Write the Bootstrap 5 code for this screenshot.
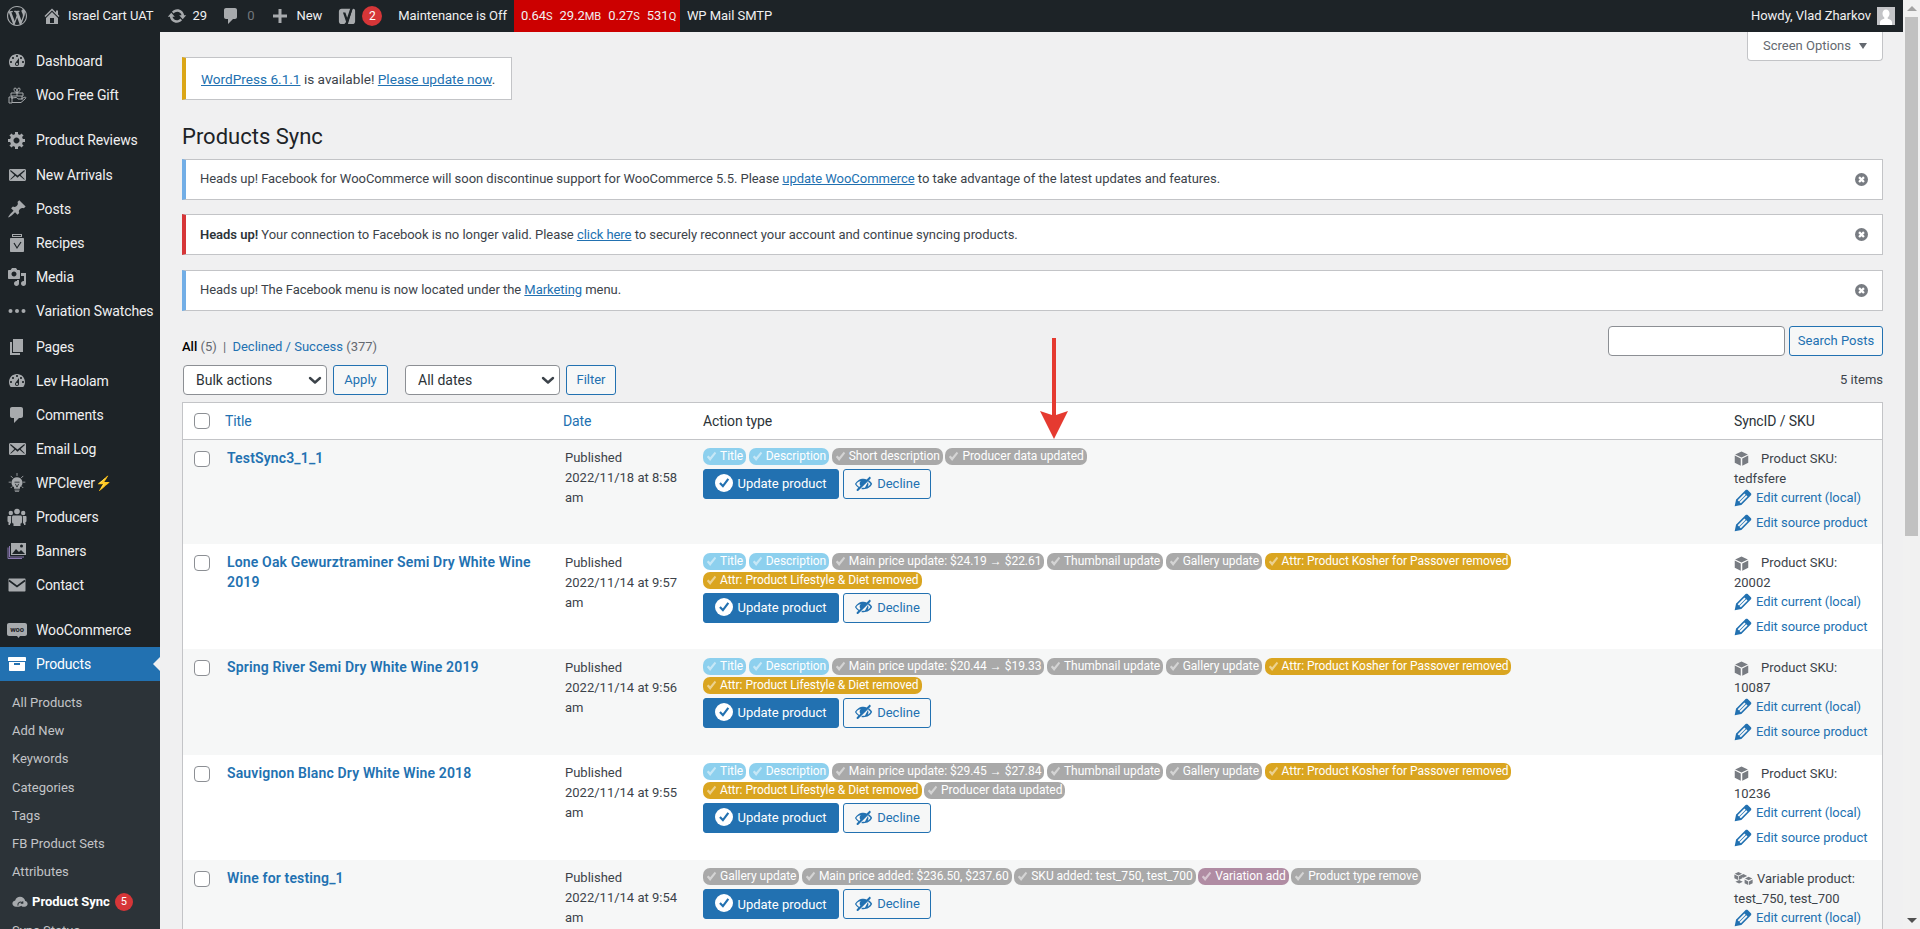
<!DOCTYPE html>
<html lang="en">
  <head>
    <meta charset="UTF-8" />
    <title>Products Sync</title>
    <link href="https://cdn.jsdelivr.net/npm/bootstrap@5.3.3/dist/css/bootstrap.min.css" rel="stylesheet" />
    <style>
      html, body { height: 100%; overflow: hidden; }
      body { font-family: Roboto, "Liberation Sans", sans-serif; font-size: 13px; line-height: 20px; color: #3c434a; background: #f0f0f1; }
      a { color: #2271b1; text-decoration: none; }
      .page-wrap { min-width: 0; height: 929px; }

      /* admin bar */
      .admin-bar { height: 32px; background: #1d2327; color: #f0f0f1; flex: none; white-space: nowrap; letter-spacing: -0.04px; }
      .admin-bar svg { fill: #a7aaad; display: block; }
      .bar-item { height: 32px; }
      .bar-logo { padding: 0 7px; }
      .bar-item span { margin-left: 6px; }
      .bar-pull { margin-left: -3px; }
      .bar-pull-sm { margin-left: -2px; }
      .bar-dim { color: #72777c; }
      .bar-count { width: 20px; height: 20px; margin-left: 6px; border-radius: 50%; background: #d63638; color: #fff; font-size: 12px; line-height: 20px; text-align: center; }
      .bar-stats { height: 32px; width: 166px; background: #c00; margin: 0 7px; padding: 0 7px; gap: 7px; }
      .bar-stats small { font-size: 11px; }
      .bar-avatar { width: 18px; height: 18px; background: #c3c4c7; margin-left: 6px; margin-right: 8px; }

      /* side menu */
      .side-menu { width: 160px; flex: none; background: #1d2327; padding-top: 12px; overflow: hidden; }
      .menu-link { height: 34px; color: #f0f0f1; font-size: 14px; letter-spacing: -0.14px; padding-left: 36px; position: relative; white-space: nowrap; }
      .menu-link svg { position: absolute; left: 7px; top: 7px; width: 20px; height: 20px; fill: #a7aaad; }
      .menu-gap { margin-top: 11px; }
      .menu-nudge { margin-top: 1px; }
      .menu-pages { margin-top: 2px; }
      .menu-active { background: #2271b1; color: #fff; }
      .menu-active svg { fill: #fff; }
      .menu-active::after { content: ""; position: absolute; right: 0; top: 10px; border: 7px solid transparent; border-right-color: #f0f0f1; border-left-width: 0; }
      .sub-menu { background: #2c3338; padding-top: 8px; }
      .sub-link { height: 28.2px; padding-left: 12px; color: #c3c4c7; white-space: nowrap; }
      .sub-current { height: 30px; margin-top: 1px; color: #fff; font-weight: 700; }
      .sub-current svg { width: 16px; height: 16px; fill: #a7aaad; margin-right: 4px; flex: none; }
      .sub-count { width: 18px; height: 18px; border-radius: 50%; background: #d63638; color: #fff; font-size: 11px; font-weight: 400; line-height: 18px; text-align: center; margin-left: 5px; }

      /* content */
      .wp-main { padding: 0 20px 0 22px; min-width: 0; }
      .screen-row { height: 25px; }
      .screen-tab { height: 29px; width: 136px; background: #fff; border: 1px solid #c3c4c7; border-top: 0; border-radius: 0 0 4px 4px; color: #646970; }
      .screen-tab i { border: 4px solid transparent; border-top: 6px solid #646970; border-bottom: 0; margin-left: 8px; display: block; }
      .update-nag { width: 330px; height: 43px; background: #fff; border: 1px solid #c3c4c7; border-left: 4px solid #dba617; padding-left: 15px; font-size: 13.6px; }
      .update-nag a, .wp-notice a { text-decoration: underline; }
      .wp-title { font-size: 22px; font-weight: 400; line-height: 29px; margin: 22px 0 7.5px 0; color: #1d2327; }
      .wp-notice { height: 41px; margin-bottom: 14.5px; background: #fff; border: 1px solid #c3c4c7; border-left: 4px solid #72aee6; padding-left: 14px; padding-right: 14px; letter-spacing: -0.04px; }
      .wp-notice-error { border-left-color: #d63638; }
      .wp-notice b { font-weight: 600; color: #2c3338; }
      .wp-notice svg { width: 13px; height: 13px; flex: none; }
      .search-row { height: 30px; margin-top: 15px; }
      .view-links { font-size: 13px; padding-top: 11px; }
      .view-links b { font-weight: 500; color: #000; }
      .view-links em { font-style: normal; color: #646970; }
      .view-links i { font-style: normal; color: #646970; margin: 0 3px; }
      .wp-input { width: 177px; height: 30px; background: #fff; border: 1px solid #8c8f94; border-radius: 4px; margin-right: 4px; }
      .wp-btn { --bs-btn-padding-x: 0; --bs-btn-padding-y: 0; height: 30px; font-size: 13px; line-height: 28px; color: #2271b1; background: #f6f7f7; border: 1px solid #2271b1; border-radius: 3px; }
      .wp-btn-search { width: 94px; }
      .wp-btn-apply { width: 55px; }
      .wp-btn-filter { width: 50px; }
      .tool-row { height: 30px; margin-top: 9px; margin-left: 1px; }
      .wp-select { --bs-form-select-bg-img: url("data:image/svg+xml,%3csvg xmlns='http://www.w3.org/2000/svg' viewBox='0 0 16 16'%3e%3cpath fill='none' stroke='%233c434a' stroke-linecap='round' stroke-linejoin='round' stroke-width='2.4' d='m3 6 5 4.5L13 6'/%3e%3c/svg%3e"); height: 30px; font-size: 14px; line-height: 28px; color: #2c3338; border: 1px solid #8c8f94; border-radius: 4px; padding: 0 20px 0 12px; background-position: right 3px center; background-size: 16px 16px; }
      .wp-select-bulk { width: 144px; margin-right: 6px; }
      .wp-select-date { width: 155px; margin-left: 17px; margin-right: 6px; }
      .item-count { color: #3c434a; }

      /* table */
      .table-box { margin-top: 7px; border: 1px solid #c3c4c7; background: #fff; }
      .sync-table { table-layout: fixed; width: 100%; margin: 0; --bs-table-color: #3c434a; --bs-table-bg: #fff; font-size: 13px; line-height: 20px; }
      .sync-table th { height: 36px; font-size: 14px; letter-spacing: -0.1px; font-weight: 400; color: #2c3338; padding: 8px 10px; vertical-align: middle; border-bottom: 1px solid #c3c4c7; }
      .sync-table td { padding: 8.5px 10px 8px; vertical-align: top; }
      .sync-table tbody tr { height: 105.2px; }
      .sync-table tr.row-alt { --bs-table-bg: #f6f7f7; }
      .sync-table .cell-check { padding: 0 0 0 11px; }
      .sync-table td.cell-check { padding-top: 11px; }
      .sync-table td.cell-date { padding-left: 12px; }
      .sync-table th.cell-title { padding-left: 8px; }
      .wp-check { display: block; width: 16px; height: 16px; margin: 0; border: 1px solid #8c8f94; border-radius: 4px; background: #fff; appearance: none; }
      .row-title { font-size: 14px; font-weight: 600; line-height: 20px; letter-spacing: 0.15px; display: block; margin-top: -0.5px; }
      .tag-list { gap: 1px 2.5px; }
      .sync-tag { height: 17px; margin-bottom: 1px; border-radius: 7px; padding: 0 3px; font-size: 12px; line-height: 17px; letter-spacing: -0.02px; color: #fff; white-space: nowrap; }
      .sync-tag svg { width: 11px; height: 11px; fill: #fff; opacity: .5; margin-right: 3px; flex: none; }
      .tag-blue { background: #8dd0ee; }
      .tag-grey { background: #a9a9a9; }
      .tag-gold { background: #daa520; }
      .tag-plum { background: #b08ca3; }
      .action-btns { gap: 4px; margin-top: 3px; }
      .btn-update { width: 136px; height: 30px; background: #2271b1; border: 1px solid #2271b1; border-radius: 3px; color: #fff; font-size: 13px; --bs-btn-padding-x: 0; --bs-btn-padding-y: 0; --bs-btn-hover-color: #fff; --bs-btn-hover-bg: #2271b1; }
      .btn-update svg { width: 18px; height: 18px; margin-right: 4px; margin-top: -2px; }
      .btn-decline { width: 88px; background: #f6f7f7; }
      .btn-decline svg { width: 19px; height: 19px; fill: #2271b1; margin-right: 4px; margin-top: -2px; }
      .sku-line { white-space: nowrap; }
      .sku-line svg { width: 15px; height: 15px; fill: #787c82; margin-right: 12px; flex: none; }
      .sku-var svg { width: 19px; margin-right: 4px; }
      .sku-edit { height: 25px; white-space: nowrap; letter-spacing: -0.05px; }
      .sku-edit:first-of-type { margin-top: -3.5px; }
      .sku-edit svg { width: 24px; height: 24px; fill: #2271b1; margin: 0 1.5px 0 -3.5px; flex: none; }
      .sync-table td.cell-sku { padding: 9px 0 0 10px; }

      /* scrollbar and annotation */
      .fake-scroll { width: 17px; flex: none; background: #f1f1f1; }
      .fake-scroll i { display: block; width: 0; margin: 6px auto 0; border: 5px solid transparent; border-top: 0; border-bottom: 5px solid #a3a3a3; }
      .fake-scroll b { display: block; width: 13px; height: 519px; margin: 6px 0 0 2px; background: #c1c1c1; }
      .fake-scroll u { display: block; width: 0; margin: auto auto 6px; border: 5px solid transparent; border-bottom: 0; border-top: 5px solid #505050; }
      .red-arrow { position: absolute; left: 1040px; top: 338px; width: 28px; height: 101px; }
    </style>
  </head>
  <body class="d-flex position-relative">
    <svg width="0" height="0" class="position-absolute">
      <defs>
        <symbol id="i-wp" viewBox="0 0 20 20"><path d="M20 10c0-5.51-4.49-10-10-10C4.48 0 0 4.49 0 10c0 5.52 4.48 10 10 10 5.51 0 10-4.48 10-10zM7.78 15.37L4.37 6.22c.55-.02 1.17-.08 1.17-.08.5-.06.44-1.13-.06-1.11 0 0-1.45.11-2.37.11-.18 0-.37 0-.58-.01C4.12 2.69 6.87 1.11 10 1.11c2.33 0 4.45.87 6.05 2.34-.68-.11-1.65.39-1.65 1.58 0 .74.45 1.36.9 2.1.35.61.55 1.36.55 2.46 0 1.49-1.4 5-1.4 5l-3.03-8.37c.54-.02.82-.17.82-.17.5-.05.44-1.25-.06-1.22 0 0-1.44.12-2.38.12-.87 0-2.33-.12-2.33-.12-.5-.03-.56 1.2-.06 1.22l.92.08 1.26 3.41zM17.41 10c.24-.64.74-1.87.43-4.25.7 1.29 1.05 2.71 1.05 4.25 0 3.29-1.73 6.24-4.4 7.78.97-2.59 1.94-5.2 2.92-7.78zM6.1 18.09C3.12 16.65 1.11 13.53 1.11 10c0-1.3.23-2.48.72-3.59C3.25 10.3 4.67 14.2 6.1 18.09zm4.03-6.63l2.58 6.98c-.86.29-1.76.45-2.71.45-.79 0-1.57-.11-2.29-.33.81-2.38 1.62-4.74 2.42-7.1z"/></symbol>
        <symbol id="i-home" viewBox="0 0 20 20"><path d="M16 8.500l1.530 1.530-1.060 1.060L10 4.620l-6.470 6.470-1.060-1.060L10 2.500l4 4v-2h2v4zm-6-2.460l6 5.990V18H4v-5.970zM12 17v-5H8v5h4z"/></symbol>
        <symbol id="i-update" viewBox="0 0 20 20"><path d="M10.200 3.280c3.530 0 6.430 2.610 6.920 6h2.080l-3.500 4-3.500-4h2.320c-.45-1.970-2.210-3.450-4.320-3.450-1.450 0-2.730.71-3.540 1.780L4.950 5.660C6.230 4.200 8.110 3.280 10.200 3.280zm-.4 13.440c-3.520 0-6.430-2.610-6.920-6H.8l3.500-4c1.170 1.330 2.330 2.670 3.500 4H5.480c.45 1.970 2.210 3.450 4.320 3.450 1.450 0 2.730-.71 3.540-1.780l1.710 1.950c-1.280 1.460-3.150 2.380-5.250 2.380z"/></symbol>
        <symbol id="i-comment" viewBox="0 0 20 20"><path d="M5 2h9c1.100 0 2 .9 2 2v7c0 1.100-.9 2-2 2h-2l-5 5v-5H5c-1.100 0-2-.9-2-2V4c0-1.100.9-2 2-2z"/></symbol>
        <symbol id="i-plus" viewBox="0 0 20 20"><path d="M17 8.500v3h-5.500V17h-3v-5.500H3v-3h5.500V3h3v5.500z"/></symbol>
        <symbol id="i-yoast" viewBox="0 0 20 22"><path d="M4 3h11l-1 2.500L8 20H4c-1.700 0-3-1.300-3-3V6c0-1.700 1.300-3 3-3zm12 0h1c1.100 0 2 .9 2 2v12c0 1.700-1.300 3-3 3h-5z"/><path fill="#1d2327" d="M14.500 0h3l-6.500 18c-.5 1.700-2 3.500-4 4v-2.200c1-.4 1.800-1.300 2-2.300L5.500 7h2.700l2 6z"/></symbol>
        <symbol id="i-dash" viewBox="0 0 20 20"><path d="M3.760 16h12.480c1.100-1.370 1.760-3.110 1.760-5 0-4.420-3.580-8-8-8s-8 3.580-8 8c0 1.890.66 3.630 1.760 5zM10 4c.55 0 1 .45 1 1s-.45 1-1 1-1-.45-1-1 .45-1 1-1zM6 6c.55 0 1 .45 1 1s-.45 1-1 1-1-.45-1-1 .45-1 1-1zm8 0c.55 0 1 .45 1 1s-.45 1-1 1-1-.45-1-1 .45-1 1-1zm-5.370 5.550L12 7v6c0 1.100-.9 2-2 2s-2-.9-2-2c0-.57.24-1.080.63-1.450zM4 10c.55 0 1 .45 1 1s-.45 1-1 1-1-.45-1-1 .45-1 1-1zm12 0c.55 0 1 .45 1 1s-.45 1-1 1-1-.45-1-1 .45-1 1-1zm-5 3c0-.55-.45-1-1-1s-1 .45-1 1 .45 1 1 1 1-.45 1-1z"/></symbol>
        <symbol id="i-gift" viewBox="0 0 20 20"><g fill="none" stroke="#a7aaad" stroke-width="1"><path d="M4 8h12v3H4zM5 11v3M15 11v4M10 8v3M10 8C7 7 6 3 8 3s2 3 2 5zm0 0c3-1 4-5 2-5s-2 3-2 5z"/><path d="M2 12h3v6H2zM5 13l4-.5c1 0 1.500 1 2 1.500h3l4-2c.8 0 1 .8.5 1.500L14 17.500H5"/></g></symbol>
        <symbol id="i-gear" viewBox="0 0 20 20"><path d="M18 12h-2.180c-.17.7-.44 1.350-.81 1.930l1.540 1.540-2.100 2.100-1.540-1.540c-.58.36-1.230.63-1.910.79V19H8v-2.180c-.68-.16-1.330-.43-1.910-.79l-1.540 1.540-2.120-2.120 1.540-1.540c-.36-.58-.63-1.230-.79-1.910H1V9.030h2.170c.16-.7.44-1.350.8-1.940L2.430 5.550l2.100-2.100 1.540 1.540c.58-.37 1.240-.64 1.930-.81V2h3v2.180c.68.16 1.330.43 1.910.79l1.540-1.540 2.120 2.120-1.540 1.540c.36.59.64 1.240.8 1.940H18V12zm-8.500 1.500c1.660 0 3-1.340 3-3s-1.340-3-3-3-3 1.340-3 3 1.340 3 3 3z"/></symbol>
        <symbol id="i-mailalt" viewBox="0 0 20 20"><path d="M19 14.500v-9c0-.83-.67-1.500-1.500-1.500H3.490c-.83 0-1.500.67-1.500 1.500v9c0 .83.67 1.500 1.500 1.500H17.500c.83 0 1.500-.67 1.500-1.500zm-1.310-9.110c.33.33.15.67-.03.84L13.600 9.950l3.900 4.060c.12.14.2.36.06.51-.13.16-.43.15-.56.05l-4.370-3.730-2.140 1.950-2.130-1.950-4.370 3.730c-.13.1-.43.11-.56-.05-.14-.15-.06-.37.06-.51l3.900-4.060-4.060-3.720c-.18-.17-.36-.51-.03-.84s.67-.17.95.07l6.240 5.040 6.250-5.040c.28-.24.62-.4.95-.07z"/></symbol>
        <symbol id="i-pin" viewBox="0 0 20 20"><path d="M10.440 3.020l1.820-1.820 6.360 6.350-1.830 1.820c-1.050-.68-2.480-.57-3.410.36l-.75.75c-.92.93-1.040 2.350-.35 3.410l-1.830 1.820-2.410-2.410-2.800 2.790c-.42.42-3.380 2.710-3.800 2.290s1.860-3.390 2.280-3.810l2.790-2.790L4.100 9.360l1.830-1.820c1.050.69 2.480.57 3.400-.36l.75-.75c.93-.92 1.050-2.350.36-3.410z"/></symbol>
        <symbol id="i-jar" viewBox="0 0 20 20"><path d="M5 1h10v3H5zM4 5h12c.6 0 1 .4 1 1v12c0 .6-.4 1-1 1H4c-.6 0-1-.4-1-1V6c0-.6.4-1 1-1z"/><path fill="none" stroke="#1d2327" stroke-width="1.200" d="M7 10l3 5 4-6M6 2.500h8"/></symbol>
        <symbol id="i-media" viewBox="0 0 20 20"><path d="M13 11V4c0-.55-.45-1-1-1h-1.670L9 1H5L3.670 3H2c-.55 0-1 .45-1 1v7c0 .55.45 1 1 1h10c.55 0 1-.45 1-1zM7 4.500c1.380 0 2.500 1.120 2.500 2.500S8.380 9.500 7 9.500 4.500 8.380 4.500 7 5.620 4.500 7 4.500zM14 6h5v10.500c0 1.380-1.120 2.500-2.500 2.500S14 17.880 14 16.500s1.120-2.500 2.500-2.500c.17 0 .34.02.5.05V9h-3V6zm-4 8.050V13h2v3.500c0 1.380-1.120 2.500-2.500 2.500S7 17.880 7 16.500 8.120 14 9.500 14c.17 0 .34.02.5.05z"/></symbol>
        <symbol id="i-dots" viewBox="0 0 20 20"><circle cx="3.500" cy="10" r="2"/><circle cx="10" cy="10" r="2"/><circle cx="16.500" cy="10" r="2"/></symbol>
        <symbol id="i-pages" viewBox="0 0 20 20"><path d="M6 15V2h10v13H6zm-1 1h8v2H3V5h2v11z"/></symbol>
        <symbol id="i-bulb" viewBox="0 0 24 24"><path d="M12 5a6.500 6.500 0 0 0-3.500 12v2h7v-2A6.500 6.500 0 0 0 12 5z"/><path fill="none" stroke="#a7aaad" stroke-width="1" d="M9 20.500h6M9.500 22h5M12 0v3.500M2 11h3M19 11h3M4.500 3.500 7 6M19.500 3.500 17 6M4.500 18 6.500 16M19.500 18 17.500 16"/><path fill="none" stroke="#1d2327" stroke-width="1" d="M9 11h6M10 13l2 4 2-4"/></symbol>
        <symbol id="i-people" viewBox="0 0 20 20"><circle cx="10" cy="4.500" r="2.800"/><circle cx="3.800" cy="6" r="2.200"/><circle cx="16.200" cy="6" r="2.200"/><path d="M6.500 8.500h7c.9 0 1.500.7 1.500 1.500v5c0 1.500-1 1.500-1.500 1.500V19h-7v-2.500C6 16.500 5 16.500 5 15v-5c0-.8.6-1.500 1.500-1.500zM1.500 9h2.700L4 16.500H3V18H1.500V15C.8 15 .5 14.500.5 14v-4c0-.6.4-1 1-1zM15.800 9h2.700c.6 0 1 .4 1 1v4c0 .5-.3 1-1 1v3H17v-1.500h-1z"/></symbol>
        <symbol id="i-banner" viewBox="0 0 20 20"><path fill="none" stroke="#8a78b0" stroke-width="1" d="M1 6.500v11h14M2.500 5v11H17"/><path d="M4 2h15v12H4z"/><path fill="#1d2327" d="M5 13l4-5 3 3 2-2 4 4zM16 5a1.500 1.500 0 1 1-3 0 1.500 1.500 0 0 1 3 0z"/></symbol>
        <symbol id="i-mail" viewBox="0 0 20 20"><path d="M2.500 3.500h15c.6 0 1 .4 1 1v11c0 .6-.4 1-1 1h-15c-.6 0-1-.4-1-1v-11c0-.6.4-1 1-1z"/><path fill="none" stroke="#1d2327" stroke-width="1.600" d="M2 5.500l8 6 8-6"/></symbol>
        <symbol id="i-woo" viewBox="0 0 20 20"><path d="M2 3h16c1.100 0 2 .9 2 2v9c0 1.100-.9 2-2 2h-5l-1.500 2-1.500-2H2c-1.100 0-2-.9-2-2V5c0-1.100.9-2 2-2z"/><text x="10" y="12" text-anchor="middle" font-size="7.500" font-weight="700" fill="#1d2327" font-family="Roboto, sans-serif">woo</text></symbol>
        <symbol id="i-box" viewBox="0 0 20 20"><path d="M19 4v3H1V4c0-.55.45-1 1-1h16c.55 0 1 .45 1 1zM2 8h16v8c0 .55-.45 1-1 1H3c-.55 0-1-.45-1-1V8zm11 3V9H7v2h6z"/></symbol>
        <symbol id="i-cloud" viewBox="0 0 20 20"><path d="M5 16C2.500 16 .5 14.300.5 12c0-2 1.500-3.700 3.500-4C4.800 5.200 7.200 3.500 10 3.500c3.300 0 6 2.300 6.500 5.300 1.800.4 3 1.700 3 3.500 0 2-1.600 3.700-3.700 3.700z"/><path fill="none" stroke="#2c3338" stroke-width="1.300" d="M7.500 14.500a3.500 3.500 0 0 1 5-4l1 1M13.500 9v2.500H11M12.500 15a3 3 0 0 1-3 1"/></symbol>
        <symbol id="i-close" viewBox="0 0 20 20"><circle cx="10" cy="10" r="10" fill="#787c82"/><path fill="#fff" d="M15 7.500 12.500 10l2.500 2.500-2.500 2.500L10 12.500 7.500 15 5 12.500 7.500 10 5 7.500 7.500 5 10 7.500 12.500 5z"/></symbol>
        <symbol id="i-tick" viewBox="0 0 20 20"><path d="M7.500 18 1.500 11l3-3 3 3.500L16 1.500l2.500 2.500z"/></symbol>
        <symbol id="i-okay" viewBox="0 0 20 20"><circle cx="10" cy="10" r="10" fill="#fff"/><path fill="none" stroke="#2271b1" stroke-width="2.400" d="m5.500 10 3.300 3.500 6-8"/></symbol>
        <symbol id="i-hidden" viewBox="0 0 20 20"><path d="M17.200 3.300l.16.17c.39.39.39 1.020 0 1.410L4.550 17.700c-.39.39-1.030.39-1.410 0l-.17-.17c-.39-.39-.39-1.020 0-1.410l1.590-1.600c-1.570-1-2.760-2.300-3.560-3.930.81-1.650 2.030-2.980 3.640-3.990S8.040 5.090 10 5.090c1.200 0 2.330.21 3.400.6l2.380-2.390c.39-.39 1.030-.39 1.420 0zM2.400 10.590c.69 1.230 1.710 2.250 3.050 3.050l1.280-1.280c-.51-.69-.77-1.470-.77-2.360 0-1.060.36-1.980 1.090-2.760-1.040.27-1.960.7-2.760 1.260-.8.58-1.430 1.270-1.890 2.090zM15.700 6.700c1.500 1 2.700 2.300 3.400 3.900-.8 1.650-2 2.980-3.600 3.990-1.610 1.010-3.440 1.500-5.500 1.500-.9 0-1.700-.1-2.500-.3l1.300-1.300c.4.100.8.100 1.200.100 1.700 0 3.200-.4 4.500-1.200 1.200-.8 2.200-1.600 2.900-2.800-.5-.9-1.200-1.700-2-2.300l-.7.700c.3.600.5 1.300.5 2 0 2.200-1.800 4-4 4z"/></symbol>
        <symbol id="i-cube" viewBox="0 0 20 20"><path d="M10 .5l8.500 4L10 8.500 1.500 4.500zM1 6l8 4v9.500l-8-4zM19 6v9.500l-8 4V10z"/></symbol>
        <symbol id="i-cubes" viewBox="0 0 26 20"><path d="M6 1l5 2.500L6 6 1 3.500zM.5 4.500 5.500 7v5L.5 9.500zM11.500 4.500v5L6.500 12V7zM13 4l5 2.500-5 2.500-5-2.500zM20 7.500l5 2.500-5 2.500-5-2.500zM14.500 11.500l5 2.500v5l-5-2.500zM25.500 11.500v5l-5 2.500v-5zM7 12l5 2.500L7 17l-5-2.500z"/></symbol>
        <symbol id="i-edit" viewBox="0 0 20 20"><path d="M13.890 3.390l2.710 2.720c.46.46.42 1.240.03 1.640l-8.010 8.020-5.560 1.160 1.160-5.580s7.600-7.630 7.990-8.030c.39-.39 1.220-.39 1.680.07zm-2.730 2.790l-5.590 5.610 1.110 1.110 5.540-5.650zm-2.970 8.230l5.580-5.600-1.070-1.080-5.590 5.600z"/></symbol>
        <symbol id="i-user" viewBox="0 0 18 18"><path fill="#fff" d="M9 2.500c2.200 0 3.500 1.700 3.500 4 0 1.800-.8 3.300-1.800 4v1.200c2.300.7 4.300 1.800 4.300 3.300v3H3v-3c0-1.500 2-2.600 4.300-3.300v-1.200c-1-.7-1.800-2.200-1.800-4 0-2.300 1.300-4 3.500-4z"/></symbol>
      </defs>
    </svg>

    <div class="page-wrap flex-grow-1 d-flex flex-column">
      <header class="admin-bar d-flex align-items-center">
        <a class="bar-item bar-logo d-flex align-items-center" href="#"><svg width="20" height="20"><use href="#i-wp" /></svg></a>
        <div class="bar-item d-flex align-items-center px-2"><svg width="20" height="20"><use href="#i-home" /></svg><span>Israel Cart UAT</span></div>
        <div class="bar-item bar-pull d-flex align-items-center px-2"><svg width="20" height="20"><use href="#i-update" /></svg><span>29</span></div>
        <div class="bar-item bar-pull-sm d-flex align-items-center px-2"><svg width="20" height="20"><use href="#i-comment" /></svg><span class="bar-dim">0</span></div>
        <div class="bar-item d-flex align-items-center px-2"><svg width="20" height="20"><use href="#i-plus" /></svg><span>New</span></div>
        <div class="bar-item d-flex align-items-center px-2"><svg width="18" height="20"><use href="#i-yoast" /></svg><div class="bar-count">2</div></div>
        <div class="bar-item d-flex align-items-center ps-2">Maintenance is Off</div>
        <div class="bar-stats d-flex align-items-center"><div>0.64<small>S</small></div><div>29.2<small>MB</small></div><div>0.27<small>S</small></div><div>531<small>Q</small></div></div>
        <div>WP Mail SMTP</div>
        <div class="ms-auto">Howdy, Vlad Zharkov</div>
        <div class="bar-avatar"><svg width="18" height="18"><use href="#i-user" /></svg></div>
      </header>

      <div class="d-flex flex-grow-1 overflow-hidden">
        <nav class="side-menu">
          <div class="menu-link d-flex align-items-center"><svg><use href="#i-dash" /></svg>Dashboard</div>
          <div class="menu-link d-flex align-items-center"><svg><use href="#i-gift" /></svg>Woo Free Gift</div>
          <div class="menu-link d-flex align-items-center menu-gap"><svg><use href="#i-gear" /></svg>Product Reviews</div>
          <div class="menu-link d-flex align-items-center menu-nudge"><svg><use href="#i-mailalt" /></svg>New Arrivals</div>
          <div class="menu-link d-flex align-items-center"><svg><use href="#i-pin" /></svg>Posts</div>
          <div class="menu-link d-flex align-items-center"><svg><use href="#i-jar" /></svg>Recipes</div>
          <div class="menu-link d-flex align-items-center"><svg><use href="#i-media" /></svg>Media</div>
          <div class="menu-link d-flex align-items-center"><svg><use href="#i-dots" /></svg>Variation Swatches</div>
          <div class="menu-link d-flex align-items-center menu-pages"><svg><use href="#i-pages" /></svg>Pages</div>
          <div class="menu-link d-flex align-items-center"><svg><use href="#i-dash" /></svg>Lev Haolam</div>
          <div class="menu-link d-flex align-items-center"><svg><use href="#i-comment" /></svg>Comments</div>
          <div class="menu-link d-flex align-items-center"><svg><use href="#i-mailalt" /></svg>Email Log</div>
          <div class="menu-link d-flex align-items-center"><svg><use href="#i-bulb" /></svg>WPClever<span style="color: #f0b849">⚡</span></div>
          <div class="menu-link d-flex align-items-center"><svg><use href="#i-people" /></svg>Producers</div>
          <div class="menu-link d-flex align-items-center"><svg><use href="#i-banner" /></svg>Banners</div>
          <div class="menu-link d-flex align-items-center"><svg><use href="#i-mail" /></svg>Contact</div>
          <div class="menu-link d-flex align-items-center menu-gap"><svg><use href="#i-woo" /></svg>WooCommerce</div>
          <div class="menu-link d-flex align-items-center menu-active"><svg><use href="#i-box" /></svg>Products</div>
          <div class="sub-menu">
            <div class="sub-link d-flex align-items-center">All Products</div>
            <div class="sub-link d-flex align-items-center">Add New</div>
            <div class="sub-link d-flex align-items-center">Keywords</div>
            <div class="sub-link d-flex align-items-center">Categories</div>
            <div class="sub-link d-flex align-items-center">Tags</div>
            <div class="sub-link d-flex align-items-center">FB Product Sets</div>
            <div class="sub-link d-flex align-items-center">Attributes</div>
            <div class="sub-link sub-current d-flex align-items-center"><svg><use href="#i-cloud" /></svg>Product Sync<div class="sub-count">5</div></div>
            <div class="sub-link d-flex align-items-center">Sync Status</div>
          </div>
        </nav>

        <main class="wp-main flex-grow-1">
          <div class="screen-row d-flex justify-content-end">
            <div class="screen-tab d-flex align-items-center justify-content-center">Screen Options<i></i></div>
          </div>
          <div class="update-nag d-flex align-items-center"><div><a href="#">WordPress 6.1.1</a> is available! <a href="#">Please update now</a>.</div></div>
          <h1 class="wp-title">Products Sync</h1>

          <div class="wp-notice d-flex align-items-center justify-content-between">
            <div>Heads up! Facebook for WooCommerce will soon discontinue support for WooCommerce 5.5. Please <a href="#">update WooCommerce</a> to take advantage of the latest updates and features.</div>
            <svg><use href="#i-close" /></svg>
          </div>
          <div class="wp-notice wp-notice-error d-flex align-items-center justify-content-between">
            <div><b>Heads up!</b> Your connection to Facebook is no longer valid. Please <a href="#">click here</a> to securely reconnect your account and continue syncing products.</div>
            <svg><use href="#i-close" /></svg>
          </div>
          <div class="wp-notice d-flex align-items-center justify-content-between">
            <div>Heads up! The Facebook menu is now located under the <a href="#">Marketing</a> menu.</div>
            <svg><use href="#i-close" /></svg>
          </div>

          <div class="search-row d-flex justify-content-between">
            <div class="view-links"><b>All</b> <em>(5)</em> <i>|</i> <a href="#">Declined / Success</a> <em>(377)</em></div>
            <div class="d-flex"><input class="wp-input" type="search" aria-label="Search" /><button class="btn wp-btn wp-btn-search">Search Posts</button></div>
          </div>

          <div class="tool-row d-flex align-items-center">
            <select class="form-select wp-select wp-select-bulk" aria-label="Bulk actions"><option>Bulk actions</option></select>
            <button class="btn wp-btn wp-btn-apply">Apply</button>
            <select class="form-select wp-select wp-select-date" aria-label="All dates"><option>All dates</option></select>
            <button class="btn wp-btn wp-btn-filter">Filter</button>
            <div class="item-count ms-auto">5 items</div>
          </div>

          <div class="table-box">
            <table class="table table-borderless sync-table">
              <colgroup>
                <col style="width: 34px" /><col style="width: 336px" /><col style="width: 140px" /><col /><col style="width: 158px" />
              </colgroup>
              <thead>
                <tr>
                  <th class="cell-check"><input class="wp-check" type="checkbox" aria-label="Select all" /></th>
                  <th class="cell-title"><a href="#">Title</a></th>
                  <th><a href="#">Date</a></th>
                  <th>Action type</th>
                  <th>SyncID / SKU</th>
                </tr>
              </thead>
              <tbody>
                <tr class="row-alt">
                  <td class="cell-check"><input class="wp-check" type="checkbox" aria-label="Select row" /></td>
                  <td><a class="row-title" href="#">TestSync3_1_1</a></td>
                  <td class="cell-date">Published<br />2022/11/18 at 8:58 am</td>
                  <td class="cell-action">
                    <div class="tag-list d-flex flex-wrap">
                      <div class="sync-tag tag-blue d-flex align-items-center"><svg><use href="#i-tick" /></svg>Title</div>
                      <div class="sync-tag tag-blue d-flex align-items-center"><svg><use href="#i-tick" /></svg>Description</div>
                      <div class="sync-tag tag-grey d-flex align-items-center"><svg><use href="#i-tick" /></svg>Short description</div>
                      <div class="sync-tag tag-grey d-flex align-items-center"><svg><use href="#i-tick" /></svg>Producer data updated</div>
                    </div>
                    <div class="action-btns d-flex">
                      <button class="btn btn-update d-flex align-items-center justify-content-center"><svg><use href="#i-okay" /></svg>Update product</button>
                      <button class="btn wp-btn btn-decline d-flex align-items-center justify-content-center"><svg><use href="#i-hidden" /></svg>Decline</button>
                    </div>
                  </td>
                  <td class="cell-sku">
                    <div class="sku-line d-flex align-items-center"><svg><use href="#i-cube" /></svg>Product SKU:</div>
                    <div>tedfsfere</div>
                    <a class="sku-edit d-flex align-items-center" href="#"><svg><use href="#i-edit" /></svg>Edit current (local)</a>
                    <a class="sku-edit d-flex align-items-center" href="#"><svg><use href="#i-edit" /></svg>Edit source product</a>
                  </td>
                </tr>
                <tr>
                  <td class="cell-check"><input class="wp-check" type="checkbox" aria-label="Select row" /></td>
                  <td><a class="row-title" href="#">Lone Oak Gewurztraminer Semi Dry White Wine 2019</a></td>
                  <td class="cell-date">Published<br />2022/11/14 at 9:57 am</td>
                  <td class="cell-action">
                    <div class="tag-list d-flex flex-wrap">
                      <div class="sync-tag tag-blue d-flex align-items-center"><svg><use href="#i-tick" /></svg>Title</div>
                      <div class="sync-tag tag-blue d-flex align-items-center"><svg><use href="#i-tick" /></svg>Description</div>
                      <div class="sync-tag tag-grey d-flex align-items-center"><svg><use href="#i-tick" /></svg>Main price update: $24.19 → $22.61</div>
                      <div class="sync-tag tag-grey d-flex align-items-center"><svg><use href="#i-tick" /></svg>Thumbnail update</div>
                      <div class="sync-tag tag-grey d-flex align-items-center"><svg><use href="#i-tick" /></svg>Gallery update</div>
                      <div class="sync-tag tag-gold d-flex align-items-center"><svg><use href="#i-tick" /></svg>Attr: Product Kosher for Passover removed</div>
                      <div class="sync-tag tag-gold d-flex align-items-center"><svg><use href="#i-tick" /></svg>Attr: Product Lifestyle &amp; Diet removed</div>
                    </div>
                    <div class="action-btns d-flex">
                      <button class="btn btn-update d-flex align-items-center justify-content-center"><svg><use href="#i-okay" /></svg>Update product</button>
                      <button class="btn wp-btn btn-decline d-flex align-items-center justify-content-center"><svg><use href="#i-hidden" /></svg>Decline</button>
                    </div>
                  </td>
                  <td class="cell-sku">
                    <div class="sku-line d-flex align-items-center"><svg><use href="#i-cube" /></svg>Product SKU:</div>
                    <div>20002</div>
                    <a class="sku-edit d-flex align-items-center" href="#"><svg><use href="#i-edit" /></svg>Edit current (local)</a>
                    <a class="sku-edit d-flex align-items-center" href="#"><svg><use href="#i-edit" /></svg>Edit source product</a>
                  </td>
                </tr>
                <tr class="row-alt">
                  <td class="cell-check"><input class="wp-check" type="checkbox" aria-label="Select row" /></td>
                  <td><a class="row-title" href="#">Spring River Semi Dry White Wine 2019</a></td>
                  <td class="cell-date">Published<br />2022/11/14 at 9:56 am</td>
                  <td class="cell-action">
                    <div class="tag-list d-flex flex-wrap">
                      <div class="sync-tag tag-blue d-flex align-items-center"><svg><use href="#i-tick" /></svg>Title</div>
                      <div class="sync-tag tag-blue d-flex align-items-center"><svg><use href="#i-tick" /></svg>Description</div>
                      <div class="sync-tag tag-grey d-flex align-items-center"><svg><use href="#i-tick" /></svg>Main price update: $20.44 → $19.33</div>
                      <div class="sync-tag tag-grey d-flex align-items-center"><svg><use href="#i-tick" /></svg>Thumbnail update</div>
                      <div class="sync-tag tag-grey d-flex align-items-center"><svg><use href="#i-tick" /></svg>Gallery update</div>
                      <div class="sync-tag tag-gold d-flex align-items-center"><svg><use href="#i-tick" /></svg>Attr: Product Kosher for Passover removed</div>
                      <div class="sync-tag tag-gold d-flex align-items-center"><svg><use href="#i-tick" /></svg>Attr: Product Lifestyle &amp; Diet removed</div>
                    </div>
                    <div class="action-btns d-flex">
                      <button class="btn btn-update d-flex align-items-center justify-content-center"><svg><use href="#i-okay" /></svg>Update product</button>
                      <button class="btn wp-btn btn-decline d-flex align-items-center justify-content-center"><svg><use href="#i-hidden" /></svg>Decline</button>
                    </div>
                  </td>
                  <td class="cell-sku">
                    <div class="sku-line d-flex align-items-center"><svg><use href="#i-cube" /></svg>Product SKU:</div>
                    <div>10087</div>
                    <a class="sku-edit d-flex align-items-center" href="#"><svg><use href="#i-edit" /></svg>Edit current (local)</a>
                    <a class="sku-edit d-flex align-items-center" href="#"><svg><use href="#i-edit" /></svg>Edit source product</a>
                  </td>
                </tr>
                <tr>
                  <td class="cell-check"><input class="wp-check" type="checkbox" aria-label="Select row" /></td>
                  <td><a class="row-title" href="#">Sauvignon Blanc Dry White Wine 2018</a></td>
                  <td class="cell-date">Published<br />2022/11/14 at 9:55 am</td>
                  <td class="cell-action">
                    <div class="tag-list d-flex flex-wrap">
                      <div class="sync-tag tag-blue d-flex align-items-center"><svg><use href="#i-tick" /></svg>Title</div>
                      <div class="sync-tag tag-blue d-flex align-items-center"><svg><use href="#i-tick" /></svg>Description</div>
                      <div class="sync-tag tag-grey d-flex align-items-center"><svg><use href="#i-tick" /></svg>Main price update: $29.45 → $27.84</div>
                      <div class="sync-tag tag-grey d-flex align-items-center"><svg><use href="#i-tick" /></svg>Thumbnail update</div>
                      <div class="sync-tag tag-grey d-flex align-items-center"><svg><use href="#i-tick" /></svg>Gallery update</div>
                      <div class="sync-tag tag-gold d-flex align-items-center"><svg><use href="#i-tick" /></svg>Attr: Product Kosher for Passover removed</div>
                      <div class="sync-tag tag-gold d-flex align-items-center"><svg><use href="#i-tick" /></svg>Attr: Product Lifestyle &amp; Diet removed</div>
                      <div class="sync-tag tag-grey d-flex align-items-center"><svg><use href="#i-tick" /></svg>Producer data updated</div>
                    </div>
                    <div class="action-btns d-flex">
                      <button class="btn btn-update d-flex align-items-center justify-content-center"><svg><use href="#i-okay" /></svg>Update product</button>
                      <button class="btn wp-btn btn-decline d-flex align-items-center justify-content-center"><svg><use href="#i-hidden" /></svg>Decline</button>
                    </div>
                  </td>
                  <td class="cell-sku">
                    <div class="sku-line d-flex align-items-center"><svg><use href="#i-cube" /></svg>Product SKU:</div>
                    <div>10236</div>
                    <a class="sku-edit d-flex align-items-center" href="#"><svg><use href="#i-edit" /></svg>Edit current (local)</a>
                    <a class="sku-edit d-flex align-items-center" href="#"><svg><use href="#i-edit" /></svg>Edit source product</a>
                  </td>
                </tr>
                <tr class="row-alt">
                  <td class="cell-check"><input class="wp-check" type="checkbox" aria-label="Select row" /></td>
                  <td><a class="row-title" href="#">Wine for testing_1</a></td>
                  <td class="cell-date">Published<br />2022/11/14 at 9:54 am</td>
                  <td class="cell-action">
                    <div class="tag-list d-flex flex-wrap">
                      <div class="sync-tag tag-grey d-flex align-items-center"><svg><use href="#i-tick" /></svg>Gallery update</div>
                      <div class="sync-tag tag-grey d-flex align-items-center"><svg><use href="#i-tick" /></svg>Main price added: $236.50, $237.60</div>
                      <div class="sync-tag tag-grey d-flex align-items-center"><svg><use href="#i-tick" /></svg>SKU added: test_750, test_700</div>
                      <div class="sync-tag tag-plum d-flex align-items-center"><svg><use href="#i-tick" /></svg>Variation add</div>
                      <div class="sync-tag tag-grey d-flex align-items-center"><svg><use href="#i-tick" /></svg>Product type remove</div>
                    </div>
                    <div class="action-btns d-flex">
                      <button class="btn btn-update d-flex align-items-center justify-content-center"><svg><use href="#i-okay" /></svg>Update product</button>
                      <button class="btn wp-btn btn-decline d-flex align-items-center justify-content-center"><svg><use href="#i-hidden" /></svg>Decline</button>
                    </div>
                  </td>
                  <td class="cell-sku">
                    <div class="sku-line sku-var d-flex align-items-center"><svg><use href="#i-cubes" /></svg>Variable product:</div>
                    <div>test_750, test_700</div>
                    <a class="sku-edit d-flex align-items-center" href="#"><svg><use href="#i-edit" /></svg>Edit current (local)</a>
                    <a class="sku-edit d-flex align-items-center" href="#"><svg><use href="#i-edit" /></svg>Edit source product</a>
                  </td>
                </tr>
              </tbody>
            </table>
          </div>
        </main>
      </div>
    </div>

    <div class="fake-scroll d-flex flex-column"><i></i><b></b><u></u></div>

    <svg class="red-arrow" viewBox="0 0 28 101"><path fill="#e53a30" d="M12 0h4v77l12-4-14 28L0 73l12 4z" /></svg>
    <script src="https://cdn.jsdelivr.net/npm/bootstrap@5.3.3/dist/js/bootstrap.bundle.min.js"></script>
  </body>
</html>
